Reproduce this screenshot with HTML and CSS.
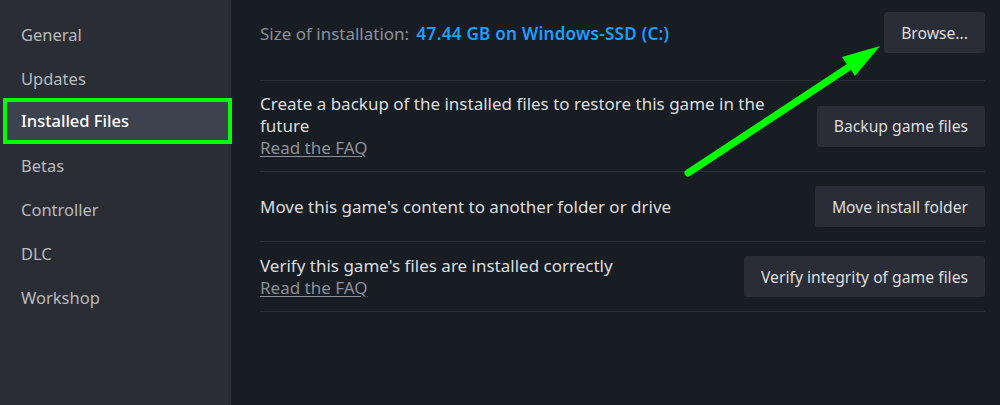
FILE: index.html
```html
<!DOCTYPE html>
<html>
<head>
<meta charset="utf-8">
<link rel="stylesheet" href="styles.css">
</head>
<body>
<div class="app">
  <nav class="sidebar">
    <div class="nav-item">General</div>
    <div class="nav-item">Updates</div>
    <div class="nav-item active">Installed Files</div>
    <div class="nav-item">Betas</div>
    <div class="nav-item">Controller</div>
    <div class="nav-item">DLC</div>
    <div class="nav-item">Workshop</div>
  </nav>
  <main class="content">
    <div class="row row-top">
      <div class="size"><span class="label">Size of installation:</span> <span class="value">47.44 GB on Windows-SSD (C:)</span></div>
      <button class="btn">Browse...</button>
    </div>
    <div class="row">
      <div class="desc">
        <div>Create a backup of the installed files to restore this game in the future</div>
        <a class="faq">Read the FAQ</a>
      </div>
      <button class="btn">Backup game files</button>
    </div>
    <div class="row">
      <div class="desc">Move this game's content to another folder or drive</div>
      <button class="btn">Move install folder</button>
    </div>
    <div class="row">
      <div class="desc">
        <div>Verify this game's files are installed correctly</div>
        <a class="faq">Read the FAQ</a>
      </div>
      <button class="btn">Verify integrity of game files</button>
    </div>
  </main>
  <svg class="arrow" width="1000" height="405" viewBox="0 0 1000 405">
    <line x1="688" y1="173" x2="852" y2="65" stroke="#00ff00" stroke-width="7" stroke-linecap="round"/>
    <polygon points="880,46 842,57 855,76" fill="#00ff00"/>
  </svg>
</div>
</body>
</html>
```
FILE: styles.css
```css
* { box-sizing: border-box; }
html, body {
  margin: 0;
  padding: 0;
  background: #181c23;
}
body {
  font-family: "Noto Sans", "Open Sans", sans-serif;
  width: 1000px;
  height: 405px;
  overflow: hidden;
}
.app {
  position: relative;
  display: flex;
  width: 1000px;
  height: 405px;
}
.sidebar {
  width: 231px;
  flex: none;
  background: #2a2d34;
  padding-top: 13px;
  display: flex;
  flex-direction: column;
}
.nav-item {
  height: 44px;
  line-height: 44px;
  padding-left: 21px;
  font-size: 16.5px;
  color: #b7bbbf;
}
.nav-item.active {
  margin: -3px -1px 0 3px;
  padding-left: 14px;
  height: 46px;
  line-height: 38px;
  border: 4px solid #00ff00;
  background: #3c424e;
  color: #ffffff;
  font-weight: 500;
}
.content {
  flex: 1;
  padding: 0 15px 0 29px;
  display: flex;
  flex-direction: column;
}
.row {
  display: flex;
  align-items: center;
  justify-content: space-between;
  padding: 12px 0;
  min-height: 70px;
  border-bottom: 1px solid #2a2e36;
}
.row-top {
  padding: 13px 0 26px;
  min-height: 81px;
  align-items: flex-start;
}
.size {
  font-size: 17px;
  line-height: 41px;
}
.label { color: #8b929a; margin-right: 3px; }
.value { color: #1a9fff; font-weight: 600; letter-spacing: 0.3px; }
.row-top .btn { margin-top: -1px; }
.desc {
  font-size: 17px;
  line-height: 22px;
  color: #dcdedf;
  max-width: 540px;
}
.faq {
  display: inline-block;
  color: #8b929a;
  text-decoration: underline;
  text-underline-offset: 2px;
}
.btn {
  font-family: inherit;
  font-size: 15.7px;
  color: #dcdedf;
  background: #2a2d35;
  border: none;
  border-radius: 3px;
  height: 41px;
  padding: 0 17px;
  flex: none;
}
.arrow {
  position: absolute;
  left: 0;
  top: 0;
  pointer-events: none;
}
```
